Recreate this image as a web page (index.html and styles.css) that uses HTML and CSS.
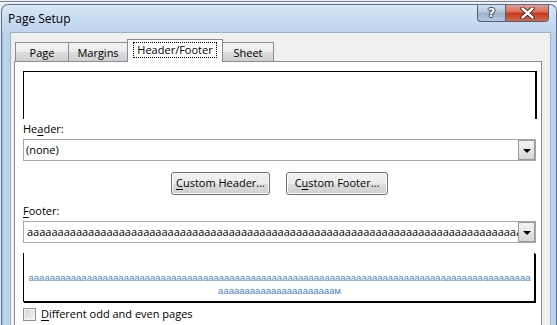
FILE: index.html
```html
<!DOCTYPE html>
<html>
<head>
<meta charset="utf-8">
<link rel="stylesheet" href="styles.css">
</head>
<body>
<div class="desk"><div class="desk-line"></div></div>
<div class="window">
  <div class="titlebar">
    <span class="title">Page Setup</span>
    <div class="caption">
      <div class="cbtn help"><span class="help-q">?</span></div>
      <div class="cbtn close">
        <svg width="15" height="12" viewBox="0 0 15 12"><path d="M2.5 1.5 L12.5 10.5 M12.5 1.5 L2.5 10.5" stroke="#3a1e1e" stroke-width="4.2" stroke-linecap="round"/><path d="M2.5 1.5 L12.5 10.5 M12.5 1.5 L2.5 10.5" stroke="#ffffff" stroke-width="2.4" stroke-linecap="round"/></svg>
      </div>
    </div>
  </div>
  <div class="client">
    <div class="tabs">
      <div class="tab tab-page">Page</div>
      <div class="tab tab-margins">Margins</div>
      <div class="tab tab-hf selected"><span class="focus">Header/Footer</span></div>
      <div class="tab tab-sheet">Sheet</div>
    </div>
    <div class="panel">
      <div class="preview preview-header"></div>
      <div class="label">He<u>a</u>der:</div>
      <div class="combo">
        <div class="combo-text">(none)</div>
        <div class="combo-btn"><span class="arrow"></span></div>
      </div>
      <div class="buttons">
        <div class="btn btn-header"><u>C</u>ustom Header...</div>
        <div class="btn btn-footer">C<u>u</u>stom Footer...</div>
      </div>
      <div class="label label-footer"><u>F</u>ooter:</div>
      <div class="combo combo-footer">
        <div class="combo-text">aaaaaaaaaaaaaaaaaaaaaaaaaaaaaaaaaaaaaaaaaaaaaaaaaaaaaaaaaaaaaaaaaaaaaaaaaaaaaaaaaaaaaaaaaaaaaaaaaaaaaaaaaaaaaaaaaaaaaaaaaaaa</div>
        <div class="combo-btn"><span class="arrow"></span></div>
      </div>
      <div class="preview preview-footer">
        <div class="preview-text">aaaaaaaaaaaaaaaaaaaaaaaaaaaaaaaaaaaaaaaaaaaaaaaaaaaaaaaaaaaaaaaaaaaaaaaaaaaaaaaaaaaaaaaaaaaaaaaaaaaaaaaaaaaaaaaaaaaaaм</div>
      </div>
      <div class="check-row">
        <span class="checkbox"></span>
        <span class="check-label"><u>D</u>ifferent odd and even pages</span>
      </div>
    </div>
  </div>
</div>
</body>
</html>
```

FILE: styles.css
```css
html, body {
  margin: 0;
  padding: 0;
}
body {
  width: 557px;
  height: 325px;
  overflow: hidden;
  background: #e9edf2;
  font-family: "Open Sans", "Noto Sans", sans-serif;
  font-size: 11px;
  color: #000;
}
u { text-decoration: underline; text-underline-offset: 2px; }

.desk {
  height: 3px;
  background: #eef1f4;
}
.desk-line {
  height: 1px;
  margin-top: 1px;
  background: #7b8591;
}

.window {
  margin-left: 1px;
  width: 556px;
  box-sizing: border-box;
  border: 1px solid #56708f;
  border-bottom: none;
  border-radius: 7px 7px 0 0;
  background: linear-gradient(to right, #9dbde5 0px, #c9dcf1 3px, #b3cdeb 6px, #c4d9f0 8px, #d3e3f4 40%, #c8dbf0 70%, #bad2ed 100%);
  height: 322px;
  overflow: hidden;
}

.titlebar {
  height: 27px;
  display: flex;
  align-items: flex-start;
  background: linear-gradient(to bottom, #d9e7f6 0%, #c9dcf1 50%, #bfd5ee 100%);
  border-radius: 6px 6px 0 0;
}
.title {
  margin-left: 6px;
  margin-top: 5px;
  font-size: 12px;
  line-height: 17px;
}
.caption {
  margin-left: auto;
  margin-right: 7px;
  margin-top: -1px;
  display: flex;
}
.cbtn {
  height: 17px;
  border: 1px solid #4e5f78;
  border-top: none;
  display: flex;
  align-items: center;
  justify-content: center;
}
.help {
  width: 27px;
  border-right: none;
  border-radius: 0 0 0 4px;
  background: linear-gradient(to bottom, #d6e1ee 0%, #b9c9dd 45%, #9fb2cb 55%, #b6c9df 100%);
}
.help-q {
  font-family: "DejaVu Sans", sans-serif;
  font-weight: bold;
  font-size: 13px;
  line-height: 13px;
  color: #fff;
  text-shadow: 0 0 1px #2f3c50, 1px 0 0 #3c4b62, -1px 0 0 #3c4b62, 0 1px 0 #3c4b62, 0 -1px 0 #3c4b62;
}
.close {
  width: 42px;
  border-radius: 0 0 4px 0;
  background: linear-gradient(to bottom, #e8a493 0%, #d9705b 45%, #c23a1f 55%, #d46a4c 100%);
}

.client {
  margin: 0 5px 0 8px;
  background: #f0f0f0;
  border: 1px solid #9cb0c8;
  border-bottom: none;
  height: 288px;
  padding: 6px 8px 0 3px;
  overflow: hidden;
}

.tabs {
  display: flex;
  align-items: flex-end;
  height: 22px;
  padding-left: 1px;
  position: relative;
  z-index: 1;
}
.tab {
  box-sizing: border-box;
  height: 19px;
  border: 1px solid #898c95;
  border-bottom: none;
  margin-left: -1px;
  background: linear-gradient(to bottom, #f3f3f3 0%, #ebebeb 50%, #dddddd 51%, #cfcfcf 100%);
  text-align: center;
  line-height: 17px;
  font-size: 11px;
  padding-top: 1px;
}
.tab-page { width: 54px; margin-left: 0; }
.tab-margins { width: 60px; }
.tab-hf { width: 96px; }
.tab-sheet { width: 52px; }
.tab.selected {
  height: 23px;
  margin-bottom: -1px;
  background: #ffffff;
  position: relative;
  z-index: 2;
  padding-top: 3px;
  line-height: 14px;
}
.focus {
  display: inline-block;
  outline: 1px dotted #000;
  padding: 0 3px;
  line-height: 14px;
}

.panel {
  background: #ffffff;
  border: 1px solid #898c95;
  height: 270px;
  padding: 9px 5px 0 8px;
}

.preview {
  box-sizing: border-box;
  background: #fff;
}
.preview-header {
  height: 48px;
  border-top: 1px solid #000;
  border-left: 1px solid #000;
  border-right: 2px solid #000;
  margin-right: -1px;
}

.label {
  margin-top: 2px;
  height: 16px;
  line-height: 16px;
}
.label-footer {
  margin-top: 8px;
}

.combo {
  margin-top: 2px;
  height: 22px;
  box-sizing: border-box;
  border: 1px solid #a7a7a7;
  display: flex;
  align-items: stretch;
  overflow: hidden;
}
.combo-text {
  flex: 1;
  overflow: hidden;
  white-space: nowrap;
  padding-left: 2px;
  line-height: 20px;
}
.combo-btn {
  width: 17px;
  box-sizing: border-box;
  border: 1px solid #9a9a9a;
  background: linear-gradient(to bottom, #f4f4f4 0%, #e6e6e6 50%, #d6d6d6 100%);
  display: flex;
  align-items: center;
  justify-content: center;
}
.arrow {
  width: 0;
  height: 0;
  border-left: 4px solid transparent;
  border-right: 4px solid transparent;
  border-top: 4px solid #000;
  margin-top: 1px;
}

.buttons {
  display: flex;
  justify-content: center;
  gap: 16px;
  margin-top: 11px;
}
.btn {
  box-sizing: border-box;
  height: 23px;
  border: 1px solid #707070;
  border-radius: 3px;
  background: linear-gradient(to bottom, #f2f2f2 0%, #ebebeb 50%, #dddddd 51%, #cfcfcf 100%);
  box-shadow: inset 0 0 0 1px #fcfcfc;
  text-align: center;
  line-height: 20px;
}
.btn-header { width: 99px; }
.btn-footer { width: 102px; }

.combo-footer .combo-text { padding-left: 3px; }

.preview-footer {
  margin-top: 10px;
  height: 49px;
  border-left: 1px solid #000;
  border-right: 1px solid #000;
  border-bottom: 1px solid #000;
  box-shadow: 1px 1px 0 #000;
  margin-right: 1px;
  padding: 18px 2px 0 3px;
}
.preview-text {
  font-family: "Liberation Sans", sans-serif;
  font-size: 9.5px;
  line-height: 13px;
  color: #4d86bd;
  text-align: center;
  word-break: break-all;
}

.check-row {
  margin-top: 6px;
  display: flex;
  align-items: flex-start;
  height: 14px;
}
.checkbox {
  width: 13px;
  height: 13px;
  box-sizing: border-box;
  border: 1px solid #8e8f8f;
  background: linear-gradient(135deg, #cbcfd5 0%, #e6e8eb 60%, #f4f4f4 100%);
  box-shadow: inset 0 0 0 1px #f4f4f4;
}
.check-label {
  margin-left: 5px;
  margin-top: -1px;
  line-height: 14px;
}
```
